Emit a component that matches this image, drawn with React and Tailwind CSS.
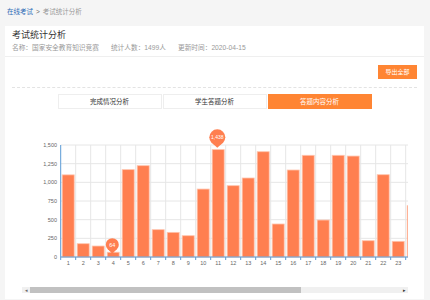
import React from 'react';

const FONT = { fontFamily: '"Liberation Sans", "Noto Sans CJK SC", sans-serif' };

const values = [1100, 178, 147, 64, 1170, 1223, 366, 330, 285, 910, 1438, 955, 1058, 1410, 442, 1165, 1362, 495, 1362, 1352, 218, 1102, 210, 687];

const LEFT = 38.7;
const TOP = 18;
const BOTTOM = 130;
const COL = 15;
const scale = (BOTTOM - TOP) / 1500;

const Pin = ({ cx, cy, r, label, size }) => (
    <g>
        <circle cx={cx} cy={cy} r={r} fill="#ff7f50" />
        <path d={`M ${cx - r * 0.55} ${cy + r * 0.8} L ${cx + r * 0.55} ${cy + r * 0.8} L ${cx} ${cy + r + 2.5} Z`} fill="#ff7f50" />
        <text x={cx} y={cy + size * 0.36} textAnchor="middle" fontSize={size} fill="#fff" style={FONT}>{label}</text>
    </g>
);

const Chart = () => {
    const ticks = [0, 250, 500, 750, 1000, 1250, 1500];
    return (
        <svg width="386" height="145" className="block">
            {ticks.map((t) => {
                const y = BOTTOM - t * scale;
                return (
                    <g key={t}>
                        <line x1={LEFT} x2={LEFT + 24 * COL} y1={y} y2={y} stroke="#e6e6e6" strokeWidth="1" />
                        <text x="35" y={y + 2} textAnchor="end" fontSize="5.5" fill="#666" style={FONT}>{t.toLocaleString('en-US')}</text>
                    </g>
                );
            })}
            {values.map((_, i) => (
                <line key={i} x1={LEFT + (i + 1) * COL} x2={LEFT + (i + 1) * COL} y1={TOP} y2={BOTTOM} stroke="#e6e6e6" strokeWidth="1" />
            ))}
            {values.map((v, i) => {
                const h = v * scale;
                return (
                    <rect key={i} x={LEFT + i * COL + 1.5} y={BOTTOM - h} width="12" height={h} fill="#ff7f50" stroke="#ffc4ad" strokeWidth="0.8" />
                );
            })}
            <line x1={LEFT} x2={LEFT} y1={TOP} y2={BOTTOM} stroke="#5b9bd5" strokeWidth="1" />
            <line x1={LEFT} x2={LEFT + 24 * COL} y1={BOTTOM} y2={BOTTOM} stroke="#5b9bd5" strokeWidth="1" />
            {values.map((_, i) => (
                <line key={i} x1={LEFT + i * COL} x2={LEFT + i * COL} y1={BOTTOM} y2={BOTTOM + 3} stroke="#5b9bd5" strokeWidth="1" />
            ))}
            {values.slice(0, 23).map((_, i) => (
                <text key={i} x={LEFT + i * COL + 7.5} y="138" textAnchor="middle" fontSize="5.5" fill="#666" style={FONT}>{i + 1}</text>
            ))}
            <Pin cx={195.3} cy={10.3} r={8} label="1,438" size={5} />
            <Pin cx={90.3} cy={117.7} r={6.5} label="64" size={5.5} />
        </svg>
    );
};

export default function App() {
    const tabs = ['完成情况分析', '学生答题分析', '答题内容分析'];
    return (
        <div className="w-[430px] h-[300px] overflow-hidden bg-[#f5f5f5]" style={FONT}>
            <div className="h-[26px] pl-[7px] pt-[8px] text-[6.5px] leading-[7px] flex items-start gap-[3px]">
                <span className="text-[#2d6cb5]">在线考试</span>
                <span className="text-[#666]">&gt;</span>
                <span className="text-[#999]">考试统计分析</span>
            </div>
            <div className="ml-[5px] mr-[6px] bg-white">
                <div className="h-[31px] pl-[7px] pt-[3px] border-b border-[#efefef]">
                    <div className="text-[9px] leading-[12px] text-[#333]">考试统计分析</div>
                    <div className="flex text-[6.7px] leading-[9px] text-[#999] mt-[2px]">
                        <span>名称：国家安全教育知识竞赛</span>
                        <span className="ml-[12px]">统计人数：1499人</span>
                        <span className="ml-[12px]">更新时间：2020-04-15</span>
                    </div>
                </div>
                <div className="h-[242px] pt-[8px]">
                    <div className="flex justify-end pr-[7px]">
                        <div className="w-[39px] h-[14px] bg-[#ff8533] text-white text-[6px] flex items-center justify-center">导出全部</div>
                    </div>
                    <div className="mx-[7px] mt-[8px] border-t border-dashed border-[#e3e3e3]" />
                    <div className="mt-[6px] flex justify-center gap-[1px]">
                        {tabs.map((t, i) => (
                            <div
                                key={t}
                                className={i === 2
                                    ? 'w-[104px] h-[15px] bg-[#ff8533] text-white text-[6.5px] flex items-center justify-center'
                                    : 'w-[104px] h-[15px] border border-[#eeeeee] text-[#333] text-[6.5px] flex items-center justify-center'}
                            >
                                {t}
                            </div>
                        ))}
                    </div>
                    <div className="ml-[17px] w-[386px] mt-[18px]">
                        <Chart />
                        <div className="mt-[15px] h-[6px] bg-[#f0f0f0] flex items-center">
                            <span className="w-[8px] text-[5px] leading-[6px] text-[#666] text-center">◂</span>
                            <div className="w-[271px] h-[6px] bg-[#c1c1c1]" />
                            <div className="flex-1" />
                            <span className="w-[8px] text-[5px] leading-[6px] text-[#333] text-center">▸</span>
                        </div>
                    </div>
                </div>
            </div>
        </div>
    );
}
